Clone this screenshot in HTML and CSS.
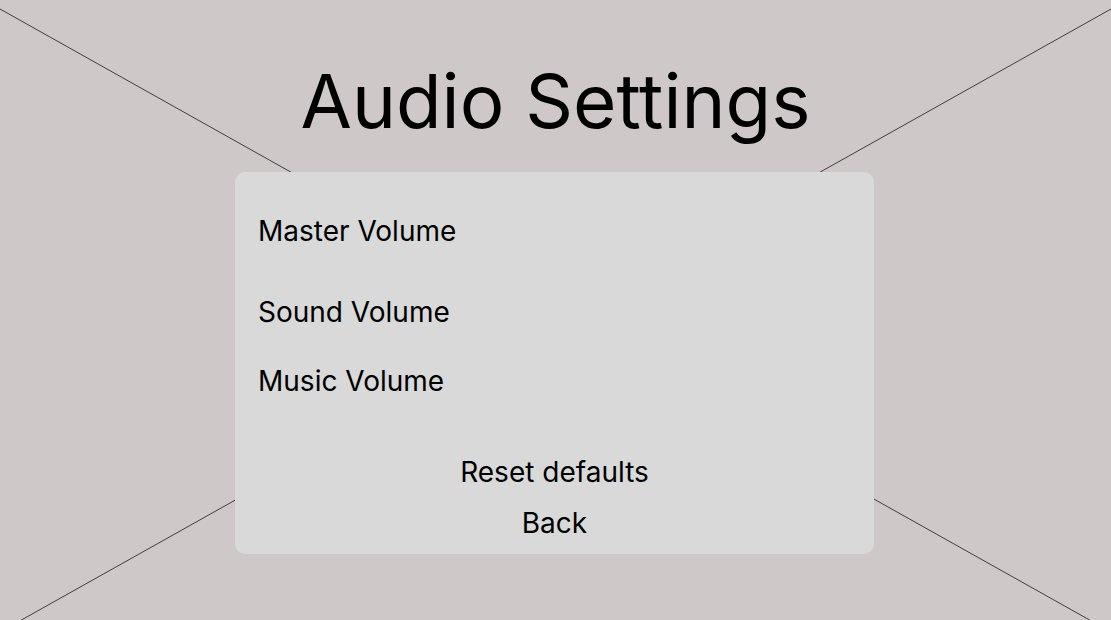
FILE: index.html
```html
<!DOCTYPE html>
<html lang="en">
<head>
<meta charset="utf-8">
<title>Audio Settings</title>
<link rel="stylesheet" href="styles.css">
</head>
<body>
<svg class="placeholder" width="1111" height="620" viewBox="0 0 1111 620" aria-hidden="true">
  <line x1="0" y1="9" x2="1111" y2="632" />
  <line x1="1111" y1="9" x2="0" y2="632" />
</svg>
<main class="screen">
  <h1 class="title">Audio Settings</h1>
  <section class="panel">
    <div class="row row-master">Master Volume</div>
    <div class="row row-sound">Sound Volume</div>
    <div class="row row-music">Music Volume</div>
    <div class="actions">
      <button class="btn btn-reset">Reset defaults</button>
      <button class="btn btn-back">Back</button>
    </div>
  </section>
</main>
</body>
</html>
```

FILE: styles.css
```css
html, body {
  margin: 0;
  padding: 0;
}
body {
  width: 1111px;
  height: 620px;
  overflow: hidden;
  background: #cfc8c8;
  font-family: Inter, "Noto Sans", sans-serif;
  color: #000;
  position: relative;
}
.placeholder {
  position: absolute;
  left: 0;
  top: 0;
}
.placeholder line {
  stroke: #3f3f3f;
  stroke-width: 1;
}
.screen {
  position: relative;
  display: flex;
  flex-direction: column;
  align-items: center;
  padding-top: 64px;
}
.title {
  margin: 0;
  font-size: 74.5px;
  line-height: 74px;
  font-weight: 400;
}
.panel {
  margin-top: 34px;
  width: 639px;
  height: 382px;
  box-sizing: border-box;
  background: #d9d9d9;
  border-radius: 10px;
  padding: 45px 23px 0;
  display: flex;
  flex-direction: column;
  margin-left: -2px;
}
.row {
  font-size: 28px;
  line-height: 28px;
}
.row-sound { margin-top: 53px; }
.row-music { margin-top: 41px; }
.actions {
  margin-top: 63px;
  display: flex;
  flex-direction: column;
  align-items: center;
  gap: 23px;
}
.btn {
  background: none;
  border: 0;
  padding: 0;
  font-family: inherit;
  font-size: 28px;
  line-height: 28px;
  color: #000;
}
```
